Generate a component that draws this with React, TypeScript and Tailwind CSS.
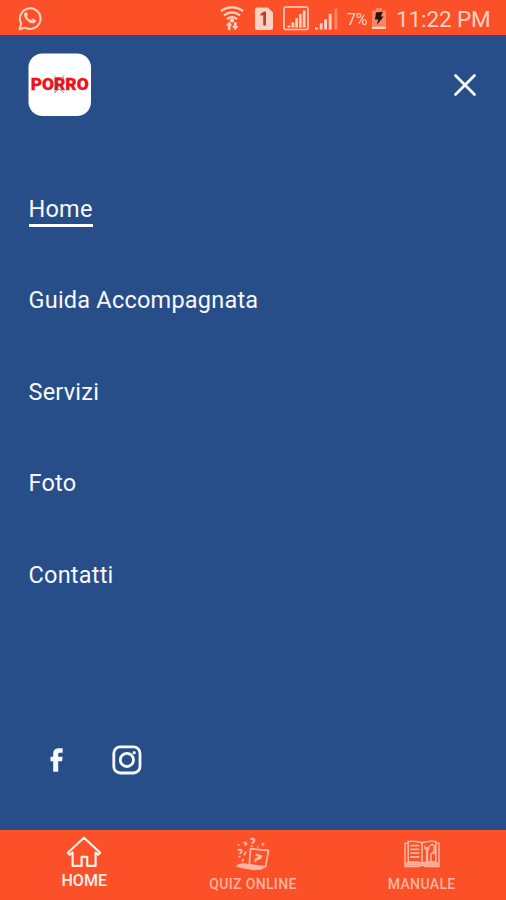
import type { ReactNode } from "react";

const menuItems = ["Home", "Guida Accompagnata", "Servizi", "Foto", "Contatti"];

function WhatsappIcon() {
  return (
    <svg width="24" height="25" viewBox="0 0 24 25" fill="none" className="shrink-0">
      <path
        d="M1.5 23.3 3.2 17.6A10.3 10.3 0 1 1 7.2 21.6Z"
        stroke="currentColor"
        strokeWidth="2"
        strokeLinejoin="round"
      />
      <path
        d="M8.9 6.6c-.4-.8-1.1-.8-1.7-.3-2.1 2-.9 4.5.7 6.7 2.2 2.9 5.4 4.8 7.7 4.3 1.9-.5 2.7-1.8 2.4-3.1l-3-1.6c-.9.5-1.2 1.8-2.1 1.5-1.8-.7-3.1-2.1-4-3.7-.2-.7 1-1.1 1-1.8Z"
        fill="currentColor"
      />
    </svg>
  );
}

function WifiIcon() {
  return (
    <svg width="24" height="25" viewBox="0 0 24 25" fill="none" className="shrink-0">
      <path
        d="M1 5.2C7 .1 17 .1 23 5.2M4 9.3c4.8-4 11.2-4 16 0M7 13.2c3.1-2.7 6.9-2.7 10 0"
        stroke="currentColor"
        strokeWidth="2.2"
      />
      <circle cx="12" cy="14.6" r="2.1" fill="currentColor" />
      <path
        d="M5.8 19.5 9.2 15.6l3 3.9h-1.7V24H7.9v-4.5ZM18.6 20 15.2 24.2 12 20h1.9v-3.8h2.6V20Z"
        fill="currentColor"
      />
    </svg>
  );
}

function SimIcon() {
  return (
    <svg width="18" height="24" viewBox="0 0 18 24" className="shrink-0">
      <path d="M2 .5h10.8L18 5.5V21a2 2 0 0 1-2 2H2a2 2 0 0 1-2-2V2.5a2 2 0 0 1 2-2Z" fill="currentColor" />
      <path d="M8.2 18.5V8L5.5 9.1V6.7L9 4.5h2v14Z" fill="#c93c28" />
    </svg>
  );
}

function BoxedSignalIcon() {
  return (
    <svg width="26" height="25" viewBox="0 0 26 25" fill="none" className="shrink-0">
      <rect x="1" y="1" width="24" height="22.5" rx="1.5" stroke="currentColor" strokeWidth="1.6" />
      <path
        d="M4.5 21.5v-2h2.8v2ZM8.5 21.5v-5h2.8v5ZM12.2 21.5v-9.2H15v9.2ZM16 21.5V8h2.6v13.5ZM19.8 21.5v-17h2.7v17Z"
        fill="currentColor"
      />
    </svg>
  );
}

function SignalIcon() {
  return (
    <svg width="24" height="24" viewBox="0 0 24 24" className="shrink-0">
      <path
        d="M0 22.5v-2h3v2ZM4.8 22.5v-6.2h2.8v6.2ZM9.2 22.5V12.2H12v10.3ZM13.8 22.5V6.7h2.8v15.8Z"
        fill="currentColor"
      />
      <path d="M19.4 22.5V1.5h3v21Z" fill="currentColor" opacity=".4" />
    </svg>
  );
}

function BatteryIcon() {
  return (
    <svg width="14" height="22" viewBox="0 0 14 22" className="shrink-0">
      <path d="M4 0h6v2.5h4V19H0V2.5h4Z" fill="#fb8567" />
      <path d="M0 18.8h14V21H0Z" fill="currentColor" />
      <path d="m4 4.5 6.8-.8-2 4.8h2.8L4.8 17l1.5-5.6H3Z" fill="#24130f" />
    </svg>
  );
}

function Logo() {
  return (
    <svg width="64" height="64" viewBox="0 0 64 64">
      <rect x=".5" y=".5" width="62.5" height="62.5" rx="14" fill="white" />
      <path
        d="M26 22.5l2 2h6l2-2M27 24v15M35.5 24v4M26 40l5-4 5 4"
        stroke="#776c70"
        strokeWidth=".9"
        fill="none"
        opacity=".8"
      />
      <text
        x="2.7"
        y="37"
        textLength="58"
        lengthAdjust="spacingAndGlyphs"
        fill="#ee101a"
        stroke="#ee101a"
        strokeWidth=".3"
        fontSize="16.5"
        fontWeight="900"
        className="font-[Roboto,sans-serif]"
      >
        PORRO
      </text>
      <path d="m27 29 3 2-2 5" stroke="#694047" strokeWidth=".7" fill="none" />
    </svg>
  );
}

function FacebookIcon() {
  return (
    <svg width="14" height="24" viewBox="0 0 14 24">
      <path
        d="M3.2 23.7V13.2H.5V8.7h2.7V6.1C3.2 2.3 5.2.2 8.7.2h4v4.5H10.2c-1.5 0-2 .6-2 1.8v2.2h4.4l-.5 4.5H8.2v10.5Z"
        fill="currentColor"
      />
    </svg>
  );
}

function InstagramIcon() {
  return (
    <svg width="30" height="30" viewBox="0 0 30 30" fill="none" className="block">
      <rect x="1.8" y="1.8" width="26.2" height="26.2" rx="6.5" stroke="currentColor" strokeWidth="2.8" />
      <circle cx="14.9" cy="14.9" r="6.6" stroke="currentColor" strokeWidth="2.8" />
      <circle cx="22.2" cy="7.7" r="1.6" fill="currentColor" />
    </svg>
  );
}

function HomeIcon() {
  return (
    <svg width="36" height="32" viewBox="0 0 36 32" fill="none">
      <path
        d="M18 1.8 1.8 16.7l2 2 2.8-2.2v13.3h9v-9h5.6v9h8.4V16.5l2.6 2.2 2-2Z"
        stroke="currentColor"
        strokeWidth="2.2"
        strokeLinejoin="round"
      />
    </svg>
  );
}

function QuizIcon() {
  return (
    <svg width="36" height="34" viewBox="0 0 36 34" fill="none">
      <path d="m15.5 11.7 18 1.8-3 16.4-16.2-2Z" stroke="currentColor" strokeWidth="1.8" strokeLinejoin="round" />
      <path d="M1.5 28.2c3.8-2 8.3-2.4 12.3-1L30 30l-3 2.6-8 .6L7.3 31.2l-5.8-1.4Z" fill="currentColor" />
      <path d="m20.8 16.2 6.4 2.2c.4 3.2-2.4 4.5-5 4.6l-1.4 2.3-1.9-.6 1.5-3.7 3.2-1-3.3-1.5Z" fill="currentColor" />
      <path
        d="M15.6 2.8c1-2 4.4-1 3.5 1.1-.4 1-1.8 1.3-1.8 2.8M16.8 8.5v1.6M3 13.7c1.2-1.8 4.5-.7 3.5 1.2-.4.9-1.6 1.1-1.6 2.4M4.4 18.9v1.6"
        stroke="currentColor"
        strokeWidth="2.2"
      />
      <path
        d="m8.6 6.2 2-.8.9 1.7-1.7 1.4M26.6 6.6l1.8.3-.7 2M2.8 7.5l1.5 1M11 14.5l-2 3.8M8.3 21.8l-.9 3M22.2 9.3l1 1"
        stroke="currentColor"
        strokeWidth="1.8"
      />
    </svg>
  );
}

function ManualIcon() {
  return (
    <svg width="36" height="28" viewBox="0 0 36 28" fill="none">
      <path
        d="M3.6 3.2H1v23.3h13.8l1-1h4.4l1 1H35V3.2h-2.6"
        stroke="currentColor"
        strokeWidth="1.5"
      />
      <path
        d="M18 2.8C14 1.1 8 1.1 4.2 1.5v20.7c5-.5 10-.4 13.8 1 4-1.4 9-1.5 13.8-1V1.5C28 1.1 22 1.1 18 2.8Zm0 0v20.4"
        stroke="currentColor"
        strokeWidth="1.7"
      />
      <path d="M2 22.4c6-.4 11-.2 16 1.2 5-1.4 10-1.6 16-1.2v3.4H2Z" fill="currentColor" opacity=".9" />
      <path
        d="M6.4 5.6h8.9M6.4 9.4h8.9M6.4 13.2h8.9M6.4 17h8.9"
        stroke="currentColor"
        strokeWidth="1.8"
      />
      <path d="M20.4 5v4l1.5 1.4V21h2.3V10.4L25.6 9V5l-1.6 2h-2Z" fill="currentColor" />
      <path
        d="m25.8 6 2.2-1.8 2.2 1.8v5.4L27 14.2V21M30 10.2v4"
        stroke="currentColor"
        strokeWidth="1.5"
      />
    </svg>
  );
}

function Tab({ label, icon, active = false }: { label: string; icon: ReactNode; active?: boolean }) {
  return (
    <button
      className={
        active
          ? "flex flex-col items-center pt-1 text-[#fff0eb]"
          : "flex flex-col items-center pt-1.5 text-[#ffb5a1]"
      }
    >
      <span className="flex h-9 items-center justify-center">{icon}</span>
      <span
        className={
          active
            ? "mt-px text-[16px] leading-5 font-medium tracking-[0.1px]"
            : "mt-0.5 text-[14px] leading-5 font-medium tracking-[0.35px]"
        }
      >
        {label}
      </span>
    </button>
  );
}

export default function App() {
  return (
    <div className="flex h-[900px] w-[506px] flex-col overflow-hidden bg-[#274e88] font-[Roboto,sans-serif] text-[#f7f9ff]">
      <header className="flex h-[35px] shrink-0 items-center bg-[#fb5028] pt-0.5 pl-[18px] text-[#ffd1c2]">
        <WhatsappIcon />
        <div className="ml-[178px] flex items-center">
          <WifiIcon />
          <span className="ml-[11px] flex"><SimIcon /></span>
          <span className="ml-[10px] flex"><BoxedSignalIcon /></span>
          <span className="ml-1.5 flex"><SignalIcon /></span>
          <span className="ml-2 w-[25px] pt-0.5 text-[16px] leading-5 tracking-[-0.3px]">7%</span>
          <BatteryIcon />
          <span className="ml-[10px] pt-px text-[22.5px] leading-6 tracking-[-0.1px] whitespace-nowrap">11:22 PM</span>
        </div>
      </header>

      <div className="flex h-[99px] shrink-0 items-center justify-between pr-[29px] pl-7">
        <Logo />
        <button aria-label="Chiudi">
          <svg width="24" height="24" viewBox="0 0 24 24" className="block">
            <path d="m2.5 2.5 19 19M21.5 2.5l-19 19" stroke="currentColor" strokeWidth="2.8" strokeLinecap="round" />
          </svg>
        </button>
      </div>

      <nav className="flex flex-col items-start gap-[58.4px] pt-[60px] pl-[28.5px]">
        {menuItems.map((item, index) => (
          <a
            key={item}
            className={
              index === 0
                ? "h-[33px] border-b-[3px] border-white text-[23.5px] leading-[31px] tracking-[0.22px] whitespace-nowrap"
                : "h-[33px] text-[23.5px] leading-[31px] tracking-[0.22px] whitespace-nowrap"
            }
          >
            {item}
          </a>
        ))}
      </nav>

      <div className="mt-auto mb-[55px] flex h-[30px] items-center pl-[50px]">
        <FacebookIcon />
        <span className="ml-12"><InstagramIcon /></span>
      </div>

      <footer className="grid h-[70px] shrink-0 grid-cols-3 bg-[#fb5028]">
        <Tab label="HOME" icon={<HomeIcon />} active />
        <Tab label="QUIZ ONLINE" icon={<QuizIcon />} />
        <Tab label="MANUALE" icon={<ManualIcon />} />
      </footer>
    </div>
  );
}
